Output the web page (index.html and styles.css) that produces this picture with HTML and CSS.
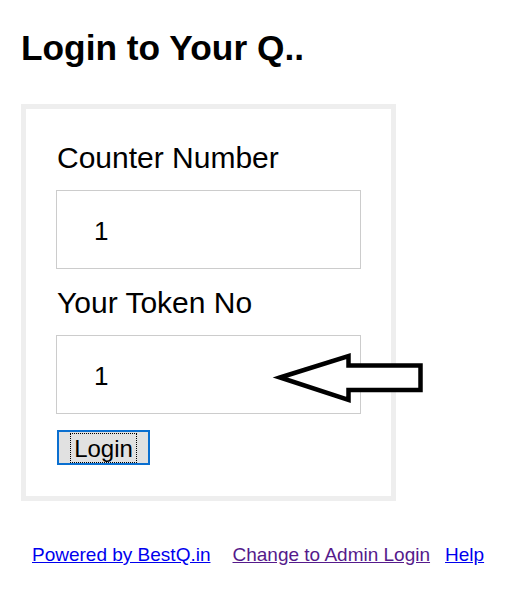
FILE: index.html
```html
<!DOCTYPE html>
<html>
<head>
<meta charset="utf-8">
<title>Login to Your Q..</title>
<link rel="stylesheet" href="styles.css">
</head>
<body>
<div class="page">
  <h1 class="title">Login to Your Q..</h1>
  <form class="card">
    <label class="field-label" for="counter">Counter Number</label>
    <input class="field-input" id="counter" type="text" value="1">
    <label class="field-label" for="token">Your Token No</label>
    <input class="field-input" id="token" type="text" value="1">
    <button class="login-btn" type="button"><span class="login-focus">Login</span></button>
    <svg class="pointer-arrow" width="156" height="60" viewBox="0 0 156 60" aria-hidden="true">
      <polygon points="10,29.5 78.5,8 78.5,17.5 150.5,17.5 150.5,42 78.5,42 78.5,52" fill="#fff" stroke="#000" stroke-width="4.5" stroke-linejoin="miter"/>
    </svg>
  </form>
  <div class="footer">
    <a class="link" href="#powered">Powered by BestQ.in</a>
    <a class="link visited" href="#admin">Change to Admin Login</a>
    <a class="link" href="#help">Help</a>
  </div>
</div>
</body>
</html>
```

FILE: styles.css
```css
html, body {
  margin: 0;
  padding: 0;
  background: #fff;
}

.page {
  padding: 28px 0 0 21px;
  font-family: "Liberation Sans", Arial, sans-serif;
  color: #000;
}

.title {
  margin: 0 0 36px 0;
  font-size: 35.3px;
  line-height: 40px;
  font-weight: bold;
}

.card {
  position: relative;
  width: 305px;
  border: 5px solid #eeeeee;
  padding: 32px 30px 31px 30px;
  margin: 0;
  display: flex;
  flex-direction: column;
  align-items: flex-start;
}

.field-label {
  display: block;
  font-size: 30px;
  line-height: 34px;
  margin: 0 0 15px 1px;
}

.field-input {
  box-sizing: border-box;
  width: 305px;
  height: 79px;
  margin: 0 0 17px 0;
  border: 1px solid #cccccc;
  padding: 4px 10px 0 37px;
  font-family: "Liberation Sans", Arial, sans-serif;
  font-size: 26px;
  color: #000;
  background: #fff;
  outline: none;
}

.login-btn {
  box-sizing: border-box;
  width: 93px;
  height: 35px;
  margin: -1px 0 0 1px;
  padding: 1px 0 0 0;
  border: 2px solid #0a6fd0;
  background: #e1e1e1;
  font-family: "Liberation Sans", Arial, sans-serif;
  font-size: 24px;
  color: #000;
  display: flex;
  justify-content: center;
  align-items: flex-start;
  border-radius: 0;
}

.login-focus {
  display: block;
  border: 1px dotted #000;
  padding: 1px 3px 0 3px;
  line-height: 27px;
}

.pointer-arrow {
  position: absolute;
  left: 244px;
  top: 239px;
}

.footer {
  display: flex;
  align-items: baseline;
  margin-top: 43px;
  padding-left: 11px;
  font-size: 19px;
  line-height: 22px;
}

.link {
  color: #0000ee;
  text-decoration: underline;
}

.link.visited {
  color: #551a8b;
  margin-left: 22px;
}

.link + .link:last-child {
  margin-left: 15px;
}
```
